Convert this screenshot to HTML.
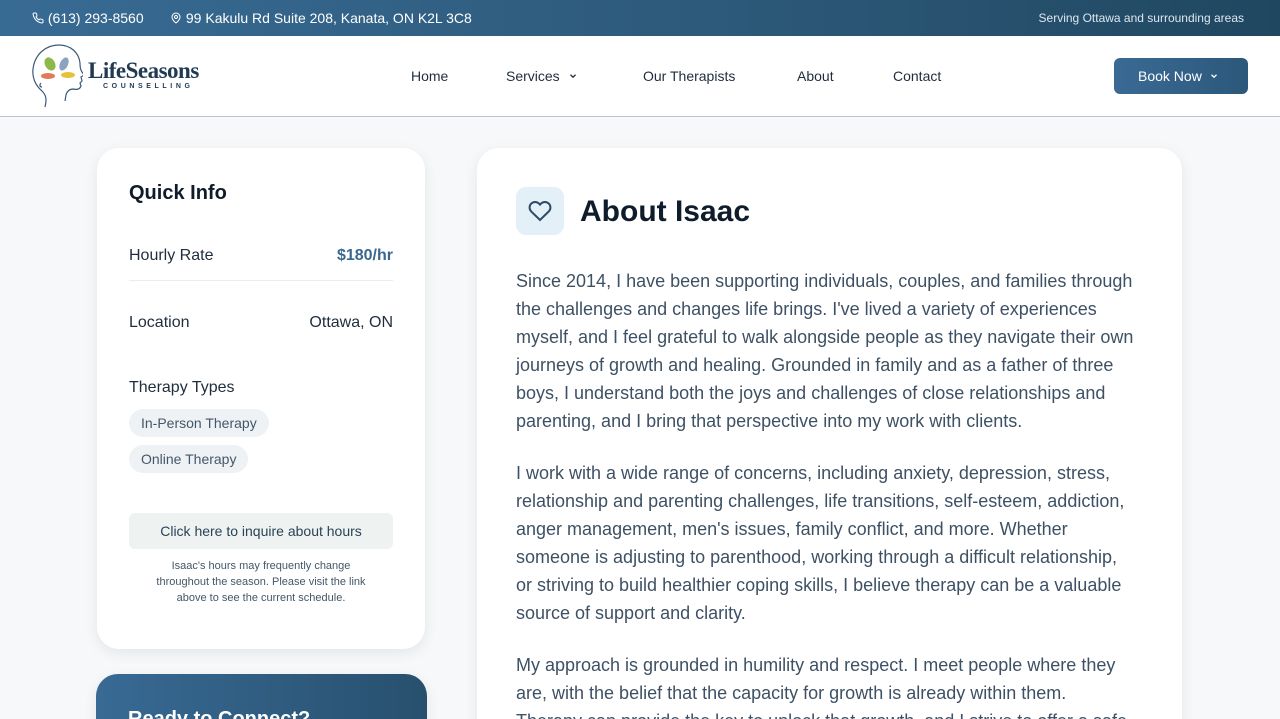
<!DOCTYPE html>
<html style="width:1280px;height:719px;overflow:hidden"><head><meta charset="utf-8"><style>
*{margin:0;padding:0;box-sizing:border-box}
body{width:1280px;height:719px;overflow:hidden;background:#f6f8fa;font-family:"Liberation Sans",sans-serif;position:relative}
.top{position:absolute;left:0;top:0;width:1280px;height:36px;background:linear-gradient(90deg,#386b94,#2c5878 60%,#204760);color:#fff;font-size:14px}
.top span{position:absolute;top:10px}
.nav{position:absolute;top:36px;left:0;width:1280px;height:81px;background:#fff;border-bottom:1px solid #b7c6d4}
.nav a{position:absolute;top:32px;font-size:14px;color:#1f2d3d}
.btn{position:absolute;left:1114px;top:22px;width:134px;height:36px;border-radius:6px;background:linear-gradient(90deg,#3a6a94,#2b587b);color:#fff;font-size:14px;padding:10px 0 0 24px}
.card{position:absolute;background:#fff;border-radius:22px;box-shadow:0 4px 14px rgba(0,0,0,.08)}
.row{position:absolute;left:32px;right:32px;font-size:16px;color:#1f2d3d}
.pill{position:absolute;left:32px;height:28px;border-radius:14px;background:#eef2f5;color:#44576a;font-size:14px;padding:6px 12px}
.p{position:absolute;left:516px;font-size:18px;line-height:28px;color:#3e5164;white-space:nowrap}
.clip{position:absolute;left:0;top:0;width:1280px;height:719px;overflow:hidden}
</style></head><body><div class="clip">
<div class="top">
<span style="left:32px"><svg width="12" height="12" viewBox="0 0 24 24" fill="none" stroke="#fff" stroke-width="2" style="vertical-align:-1px"><path d="M22 16.9v3a2 2 0 0 1-2.2 2 19.8 19.8 0 0 1-8.6-3.1 19.5 19.5 0 0 1-6-6A19.8 19.8 0 0 1 2.1 4.2 2 2 0 0 1 4.1 2h3a2 2 0 0 1 2 1.7c.1 1 .4 1.9.7 2.8a2 2 0 0 1-.5 2.1L8 9.8a16 16 0 0 0 6 6l1.3-1.3a2 2 0 0 1 2.1-.4c.9.3 1.8.6 2.8.7a2 2 0 0 1 1.7 2z"/></svg> (613) 293-8560</span>
<span style="left:170px"><svg width="12" height="12" viewBox="0 0 24 24" fill="none" stroke="#fff" stroke-width="2" style="vertical-align:-1px"><path d="M20 10c0 6-8 12-8 12s-8-6-8-12a8 8 0 0 1 16 0z"/><circle cx="12" cy="10" r="3"/></svg> 99 Kakulu Rd Suite 208, Kanata, ON K2L 3C8</span>
<span style="right:36px;font-size:12px;top:11px;color:#dde7ef">Serving Ottawa and surrounding areas</span>
</div>
<div class="nav">
<svg style="position:absolute;left:31px;top:7px" width="52" height="66" viewBox="0 0 52 66" fill="none" stroke="#3d5a78" stroke-width="1.2"><path d="M14 64c2-8 1-12-3-16C4 42 1 34 2 26 4 10 16 2 28 2c12 0 20 8 21 18 0 6 1 8 4 12l-3 2 1 4-2 2 1 3c-1 3-4 4-8 3-3 0-6 2-7 6l-1 6"/><path d="M10 40c-2 2-1 4 1 4" /></svg>
<svg style="position:absolute;left:40px;top:20px" width="36" height="30" viewBox="0 0 36 30"><ellipse cx="10" cy="8" rx="5" ry="7" fill="#8db84a" transform="rotate(-30 10 8)"/><ellipse cx="24" cy="8" rx="4" ry="7" fill="#8aa4bf" transform="rotate(25 24 8)"/><ellipse cx="8" cy="20" rx="7" ry="3" fill="#e07b5a"/><ellipse cx="28" cy="19" rx="7" ry="3" fill="#e6c23a"/></svg>
<div style="position:absolute;left:88px;top:22px;font-family:'Liberation Serif',serif;font-weight:bold;font-size:23px;color:#1f3a52;letter-spacing:-.5px">LifeSeasons</div>
<div style="position:absolute;left:103px;top:47px;font-size:7px;letter-spacing:3.6px;color:#1f3a52;font-weight:bold">COUNSELLING</div>
<a style="left:411px">Home</a>
<a style="left:506px">Services <svg width="10" height="10" viewBox="0 0 24 24" fill="none" stroke="#1f2d3d" stroke-width="3" style="margin-left:4px"><path d="M6 9l6 6 6-6"/></svg></a>
<a style="left:643px">Our Therapists</a>
<a style="left:797px">About</a>
<a style="left:893px">Contact</a>
<div class="btn">Book Now <svg width="10" height="10" viewBox="0 0 24 24" fill="none" stroke="#fff" stroke-width="3" style="margin-left:3px"><path d="M6 9l6 6 6-6"/></svg></div>
</div>

<div class="card" style="left:97px;top:148px;width:328px;height:501px">
<div class="row" style="top:34px;font-size:20px;font-weight:bold;color:#0f1c2b">Quick Info</div>
<div class="row" style="top:99px">Hourly Rate<span style="float:right;color:#3a6790;font-weight:bold">$180/hr</span></div>
<div style="position:absolute;left:32px;right:32px;top:132px;border-top:1px solid #e8edf1"></div>
<div class="row" style="top:166px">Location<span style="float:right">Ottawa, ON</span></div>
<div class="row" style="top:231px">Therapy Types</div>
<div class="pill" style="top:261px">In-Person Therapy</div>
<div class="pill" style="top:297px">Online Therapy</div>
<div style="position:absolute;left:32px;right:32px;top:365px;height:36px;background:#eef3f2;border-radius:6px;text-align:center;font-size:14px;color:#2c4257;padding-top:10px">Click here to inquire about hours</div>
<div style="position:absolute;left:32px;right:32px;top:410px;text-align:center;font-size:11px;line-height:16px;color:#44576a">Isaac's hours may frequently change<br>throughout the season. Please visit the link<br>above to see the current schedule.</div>
</div>
<div class="card" style="left:96px;top:674px;width:331px;height:80px;background:linear-gradient(90deg,#386a94,#28506e)"><div style="position:absolute;left:32px;top:34px;color:#fff;font-weight:bold;font-size:20px">Ready to Connect?</div></div>

<div class="card" style="left:477px;top:148px;width:705px;height:620px"></div>
<div style="position:absolute;left:516px;top:187px;width:48px;height:48px;border-radius:10px;background:#e3f0f8"><svg style="position:absolute;left:12px;top:12px" width="24" height="24" viewBox="0 0 24 24" fill="none" stroke="#2f4a66" stroke-width="2"><path d="M20.8 4.6a5.5 5.5 0 0 0-7.8 0L12 5.7l-1-1.1a5.5 5.5 0 0 0-7.8 7.8l1 1L12 21l7.8-7.6 1-1a5.5 5.5 0 0 0 0-7.8z"/></svg></div>
<div style="position:absolute;left:580px;top:195px;font-size:30px;font-weight:bold;color:#0f1c2b">About Isaac</div>
<div class="p" style="top:267px">Since 2014, I have been supporting individuals, couples, and families through<br>the challenges and changes life brings. I've lived a variety of experiences<br>myself, and I feel grateful to walk alongside people as they navigate their own<br>journeys of growth and healing. Grounded in family and as a father of three<br>boys, I understand both the joys and challenges of close relationships and<br>parenting, and I bring that perspective into my work with clients.</div>
<div class="p" style="top:459px">I work with a wide range of concerns, including anxiety, depression, stress,<br>relationship and parenting challenges, life transitions, self-esteem, addiction,<br>anger management, men's issues, family conflict, and more. Whether<br>someone is adjusting to parenthood, working through a difficult relationship,<br>or striving to build healthier coping skills, I believe therapy can be a valuable<br>source of support and clarity.</div>
<div class="p" style="top:651px">My approach is grounded in humility and respect. I meet people where they<br>are, with the belief that the capacity for growth is already within them.<br>Therapy can provide the key to unlock that growth, and I strive to offer a safe</div>
</div></body></html>
